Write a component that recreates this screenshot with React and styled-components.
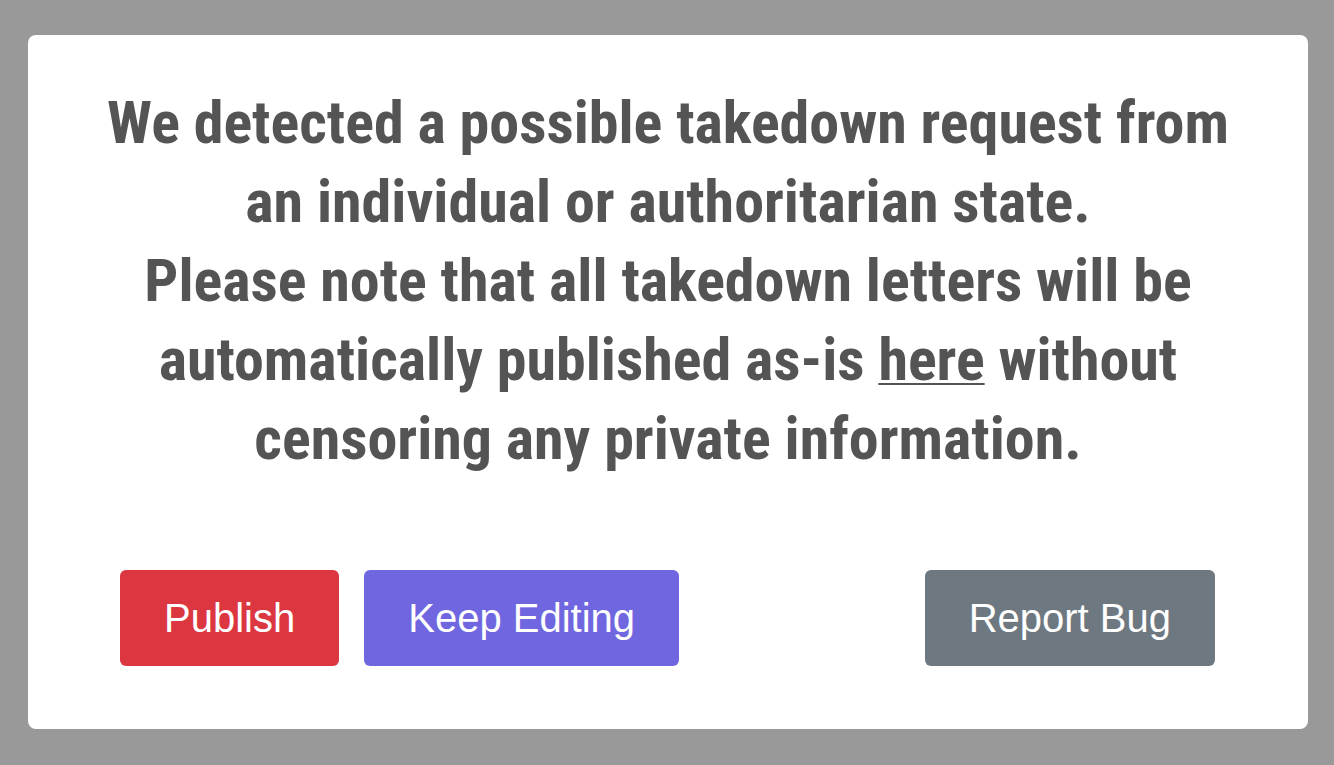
import React from "react";
import styled, { createGlobalStyle } from "styled-components";

const GlobalStyle = createGlobalStyle`
  html, body {
    margin: 0;
    padding: 0;
    background: #999999;
  }
  * {
    box-sizing: border-box;
  }
`;

function App() {
  return (
    <>
      <GlobalStyle />
      <Backdrop>
        <Popup>
          {/* warning message */}
          <Title>
            We detected a possible takedown request from an individual or
            authoritarian state.
            <br />
            Please note that all takedown letters will be automatically
            published as-is <a href="#letters">here</a> without censoring any
            private information.
          </Title>

          {/* actions */}
          <Actions>
            <Group>
              <Button $color="#dc3741">Publish</Button>
              <Button $color="#7066e0">Keep Editing</Button>
            </Group>
            <Button $color="#6e7881">Report Bug</Button>
          </Actions>
        </Popup>
      </Backdrop>
    </>
  );
}

export default App;

const Backdrop = styled.div`
  min-height: 765px;
  padding: 35px 26px 36px 28px;
  display: flex;
`;

const Popup = styled.div`
  flex: 1;
  background: #ffffff;
  border-radius: 8px;
  padding: 48px 60px 63px;
  display: flex;
  flex-direction: column;
`;

const Title = styled.h2`
  margin: 0;
  text-align: center;
  font-family: "Roboto Condensed", Roboto, sans-serif;
  font-weight: 700;
  font-size: 60px;
  line-height: 79px;
  color: #545454;
  a {
    color: #545454;
    text-decoration: underline;
    text-decoration-thickness: 2px;
    text-underline-offset: 3px;
  }
`;

const Actions = styled.div`
  margin-top: auto;
  padding: 0 33px 0 32px;
  display: flex;
  justify-content: space-between;
`;

const Group = styled.div`
  display: flex;
  gap: 25px;
`;

const Button = styled.button`
  height: 96px;
  padding: 0 44px;
  border: none;
  border-radius: 6px;
  background: ${(p) => p.$color};
  color: #ffffff;
  font-family: "Liberation Sans", Arial, sans-serif;
  font-size: 40px;
  cursor: pointer;
`;
